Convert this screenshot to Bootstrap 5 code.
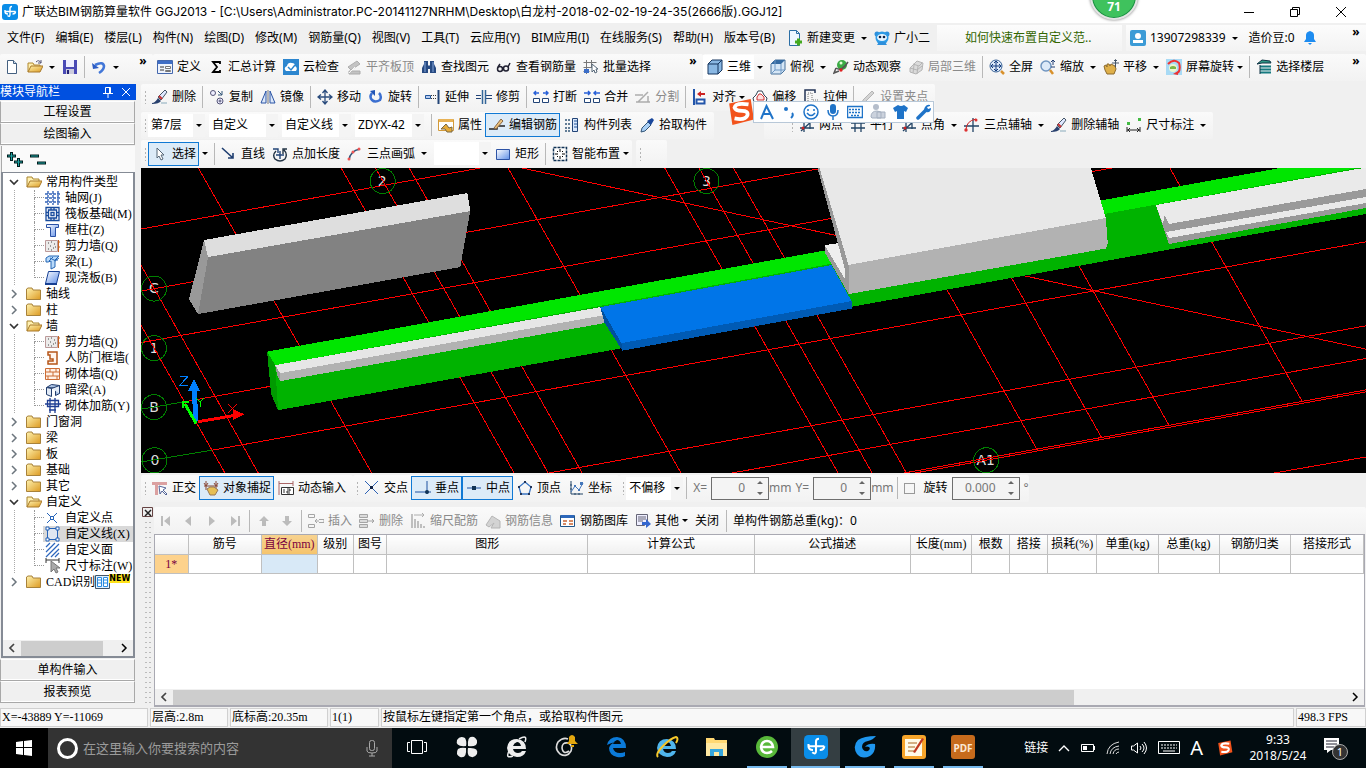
<!DOCTYPE html>
<html lang="zh-CN">
<head>
<meta charset="utf-8">
<meta name="viewport" content="width=device-width, initial-scale=1">
<title>广联达BIM钢筋算量软件 GGJ2013</title>
<link href="https://cdn.jsdelivr.net/npm/bootstrap@5.3.0/dist/css/bootstrap.min.css" rel="stylesheet">
<style>
body{font:12px/16px "Noto Sans","Noto Sans CJK SC",sans-serif;color:#000;background:#f0f0f0;overflow:hidden}
button,a.mn{background:none;border:0;padding:0;color:inherit;font:inherit;text-decoration:none;white-space:nowrap}
svg{flex:none}
.song{font-family:"Liberation Serif","Noto Sans CJK SC",serif}
.titlebar{height:23px;background:#fff;padding:0 2px}
.caption{font-family:Inter,"Noto Sans CJK SC",sans-serif}
.winbtn{width:46px;height:22px}
.menurow{height:28px;padding:2px 0 0 7px}
.mainmenu{gap:11px}
.strip{height:26px;background:linear-gradient(#fcfcfc,#f3f3f3)}
.tipbox{width:185px;color:#336600;padding-left:28px}
.account{width:240px}
.toprow{height:32px}
.bar1{width:153px}.bar2{width:550px}
.toolbar{height:27px;display:flex;align-items:center;background:linear-gradient(#fafafa,#f2f2f2);border-radius:2px;white-space:nowrap}
.brow{height:28px;align-items:center}
.brow.low{height:29px}
.tb{display:inline-flex;align-items:center;gap:4px;height:24px;padding:0 3px 0 4px;border:0}
.tb:disabled{color:#8a8a8a}
.tb:disabled svg{filter:grayscale(1);opacity:.45}
.tb.on{background:#dcebf8;outline:1px solid #1079d4;outline-offset:-1px}
.car{width:0;border:3px solid transparent;border-top:3px solid #000;border-bottom:0;height:3px}
.tb .car{margin-left:-1px}
.split{width:12px;height:24px;display:inline-flex;align-items:center;justify-content:center}
.sep{width:1px;height:22px;background:#b8b8b8;margin:0 2px 0 3px;flex:none}
.grip{width:7px;height:14px;flex:none;background:radial-gradient(circle,#b4b4b4 1px,transparent 1px) 1px 0/7px 4px}
.combo{appearance:none;border:0;height:23px;padding:0 3px;margin-right:4px;border-radius:0;background:url("data:image/svg+xml,%3Csvg xmlns='http://www.w3.org/2000/svg' width='12' height='23'%3E%3Crect width='12' height='23' fill='%23f4f4f4'/%3E%3Cpath d='M3 10h6l-3 3z'/%3E%3C/svg%3E") right center no-repeat #fff;width:69px;color:#000}
.combo.short{width:57px}
.aux{margin-left:50px}
.more{width:12px;height:28px;padding-bottom:12px;font-weight:bold}
.ime{left:727px;top:97px;height:30px;z-index:5}
.imebox{height:22px;background:#fdfeff;border:1px solid #b8c8d8;gap:7px;padding:0 1px 0 5px;margin-left:-2px}
.badge71{left:1090px;top:-28px;width:48px;height:48px;border-radius:50%;background:#3fc25d;border:2px solid #e4e4e4;box-shadow:0 0 3px #777,inset 0 0 0 1px #1c8d44;color:#fff;font-weight:bold;padding-top:25px;text-align:center;z-index:5}
.sidepane{width:138px;padding-right:1px;flex:none}
.sidehead{height:16px;margin:1px 1px 1px 0;background:#0050e0;color:#fff;padding-bottom:1px}
.sidebtn{height:22px;background:#f0f0f0;border:1px solid #a8a8a8;border-top-color:#fff;outline:0;width:135px;display:block;box-shadow:inset 0 -1px #fff}
.sidetool{height:26px;margin:1px 2px 0 1px;border-left:1px solid #aaa;background:#fafafa;gap:7px;padding:0 5px}
.treebox{margin:0 2px 1px 1px;border:2px solid #858b95;border-width:1px 2px 2px;background:#fff;overflow:hidden}
.tree,.tree ul{list-style:none;margin:0;padding:0}
.tree{padding-top:1px}
.tree li{white-space:nowrap;position:relative}
.twig{height:16px;display:flex;align-items:center}
.twig i{width:10px;height:16px;margin:0 7px 0 6px;display:flex;align-items:center;justify-content:center}
.twig svg{margin-right:4px}
.twig .leaf{margin-left:42px;margin-right:4px}
.tree ul{background:linear-gradient(#aaa 50%,transparent 50%) 11px 0/1px 2px repeat-y}
.tree ul li::before{content:"";position:absolute;left:31px;top:0;width:10px;height:8px;border-left:1px dotted #999;border-bottom:1px dotted #999}
.tree ul li:not(:last-child)::after{content:"";position:absolute;left:31px;top:8px;height:8px;border-left:1px dotted #999}
.tree .sel{background:linear-gradient(90deg,transparent 40px,#d9d9d9 40px)}
.hs{height:16px;background:#f0f0f0;display:flex;align-items:center}
.hs b{background:#cdcdcd;height:15px}
.newtag{font:bold 8px/9px "DejaVu Sans",sans-serif;background:#ffe21a;align-self:flex-start;margin-left:-6px}
.view{height:305px;background:#000;display:block;width:100%}
.snaprow{height:30px;align-items:center}
.spin{height:23px;border:1px solid #6e6e6e;background:#f4f4f4;width:58px;display:flex;align-items:center;padding-right:5px}
.spin input{width:100%;min-width:0;border:0;background:none;text-align:right;color:#777;padding:0 12px 0 0}
.spin.wide{width:68px}
.dim{color:#777}
.chk{appearance:none;width:11px;height:11px;border:1px solid #999;background:#f6f6f6;margin:0 9px 0 4px}
.gripcol{width:13px;flex:none;padding:4px 0 2px 1px}
.gripcol div{width:7px;margin:2px auto 0 2px;background:radial-gradient(circle,#bbb 1px,transparent 1px) 0 0/4px 5px}
.griddock{border:1px solid #a9a9b2;border-width:1px 1px 2px 1px;background:#fff;margin-right:1px}
.bars{table-layout:fixed;width:100%;border-collapse:collapse;text-align:center}
.bars th,.bars td{border:1px solid #c0c0c0;height:19px;line-height:16px;padding:0;font-weight:normal;overflow:hidden;white-space:nowrap}
.bars th:first-child{border-left:0}.bars thead th{border-top:0;background:linear-gradient(#fff,#f0f0f0)}
.bars thead .cur{background:linear-gradient(#f7d28f,#f5c46c);color:#7a0040}
.bars tbody .rowno{background:#fdd28c;color:#7a0040}
.bars .curcell{background:#d8e9f7;border-left-color:#000}
.c33{width:33px}.c73{width:73px}.c56{width:56px}.c36{width:36px}.c201{width:201px}.c166{width:166px}.c156{width:156px}.c61{width:61px}.c38{width:38px}.c49{width:49px}.c71{width:71px}
.stat{height:21px;gap:2px;padding-top:1px}
.stat div{border:1px solid #d0d0d0;background:#f8f8f8;padding:0 1px;height:19px;white-space:nowrap}
.st1{width:148px}.st2{width:78px}.st3{width:98px}.st4{width:49px}.st5{width:70px}
.taskbar{height:40px;background:#020c10;color:#fff}
.startbtn{width:48px;height:40px;background:#000}
.seek{width:344px;height:40px;background:#333;padding:0 12px 0 8px;gap:4px}
.seek input{background:none;border:0;color:#fff;flex:1;font-size:13px;min-width:0;padding:0}
.seek input::placeholder{color:#9b9b9b;opacity:1}
.app{width:50px;height:40px;border-bottom:2px solid transparent;display:flex;align-items:center;justify-content:center}
.app.run{border-bottom-color:#76b9ed;width:40px;margin:0 4px 0 5px}
.app.front{width:49px;border-bottom-color:#76b9ed;background:#343e42}
.tray{gap:10px;padding-right:17px}
.clock{width:62px;text-align:center}
</style>
</head>
<body class="d-flex flex-column vh-100">
<svg width="0" height="0" class="position-absolute" aria-hidden="true">
<defs>
<linearGradient id="gb" x2="1" y2="1"><stop stop-color="#fff"/><stop offset="1" stop-color="#5f8fe8"/></linearGradient>
<linearGradient id="gy" x2="1" y2="1"><stop stop-color="#fff3b0"/><stop offset="1" stop-color="#dc9a22"/></linearGradient>
</defs>
<symbol id="logo" viewBox="0 0 16 16"><rect width="16" height="16" rx="3" fill="#0a8de8"/><path d="M5.500 11.500q2.500 2 2.500-1V4.500q0-2 2-2M3 7.500h10.500M3 6v1.500q0 2.500 3 2.500M13.500 7.500q0 2.500-3 2.500" fill="none" stroke="#fff" stroke-width="1.400"/></symbol>
<symbol id="new" viewBox="0 0 16 16"><path d="M3.500 1.500h6l3 3v10h-9z" fill="#fff" stroke="#446080"/><path d="M9.500 1.500v3h3" fill="#cde" stroke="#446080"/></symbol>
<symbol id="open" viewBox="0 0 16 16"><path d="M1 13V4h5l1 2h6v3" fill="#fff0b0" stroke="#b08830"/><path d="M1 13l3-6h12l-3 6z" fill="url(#gy)" stroke="#a8792a"/><path d="M9 3q3-3 5 1m0-3v3h-3" fill="none" stroke="#557"/></symbol>
<symbol id="save" viewBox="0 0 16 16"><path d="M1 1h14v14H1z" fill="#4a4ab5"/><path d="M4 1h8v7H4z" fill="#eef"/><path d="M4 10h8v5H4z" fill="#ccd"/><path d="M5 11h2v4H5z" fill="#227"/></symbol>
<symbol id="undo" viewBox="0 0 16 16"><path d="M4 6q8-4 9 1 0 4-5 7" fill="none" stroke="#4277d8" stroke-width="2.600"/><path d="M1 4l1 6 6-1z" fill="#2c5cc4"/></symbol>
<symbol id="form" viewBox="0 0 16 16"><path d="M.5 1.500h15v13H.5z" fill="#eef3fc" stroke="#4468ae"/><path d="M1 2h14v3H1z" fill="#3f6ec6"/><path d="M3 8h4M3 11h4" stroke="#333"/><path d="M8.500 7.500h5v2h-5zM8.500 11.500h5v1h-5z" fill="#fff" stroke="#777"/></symbol>
<symbol id="sum" viewBox="0 0 16 16"><path d="M12 5V3H5l4 5-4 5h7v-2" fill="none" stroke="#000" stroke-width="1.800"/></symbol>
<symbol id="cloud" viewBox="0 0 16 16"><rect width="16" height="16" fill="#2c86cf"/><path d="M3 12q-3-3 1-5 1-4 5-3 3 0 3 3 3 2 1 5z" fill="#fff"/><path d="M5 8l3 3 4-5" fill="none" stroke="#2c86cf" stroke-width="1.500"/></symbol>
<symbol id="flat" viewBox="0 0 16 16"><path d="M2 8l9-6 3 3-9 6zM3 12h11v3H3z" fill="#888" stroke="#555"/><path d="M3 14l6-6" stroke="#fff"/></symbol>
<symbol id="bino" viewBox="0 0 16 16"><path d="M3 2h4v4l1 1 1-1V2h4v3l2 4v5H9v-4H7v4H1V9l2-4z" fill="#274a82"/><path d="M4 3v10M12 3v10" stroke="#86a8dd"/></symbol>
<symbol id="specs" viewBox="0 0 16 16"><g fill="none" stroke="#223" stroke-width="1.500"><circle cx="4" cy="10" r="2.500"/><circle cx="10" cy="9.500" r="2.500"/><path d="M6 9h2M12 8l2-4M2 8l2-3"/></g></symbol>
<symbol id="batch" viewBox="0 0 16 16"><path d="M3.500 1v14M8.500 1v8M.5 3.500h13M.5 8.500h8M.5 12.500h6" stroke="#777"/><path d="M1 10h5v4H1z" fill="#3b6ec8"/><path d="M9 5v8l2-2 1 3 2-1-1-3h2z" fill="#fff" stroke="#567"/></symbol>
<symbol id="cube" viewBox="0 0 16 16"><path d="M1 5l4-4h10v10l-4 4H1z" fill="#8ab8e4" stroke="#15355e"/><path d="M1 5h10v10M11 5l4-4" fill="none" stroke="#15355e"/></symbol>
<symbol id="cubetop" viewBox="0 0 16 16"><path d="M1 5l4-4h10v10l-4 4H1z" fill="#d5e6f6" stroke="#46709a"/><path d="M1 5l4-4h10l-4 4z" fill="#356ba2"/><path d="M11 5v10M5 1v10l-4 4M5 11h10" fill="none" stroke="#6d97c4"/></symbol>
<symbol id="orbit" viewBox="0 0 16 16"><circle cx="9" cy="6" r="5" fill="#3bab44"/><circle cx="8" cy="4" r="1.500" fill="#e3ffd8"/><path d="M3 9q6 4 12-6M3 9l-2 5 5-2" fill="none" stroke="#555" stroke-width="1.500"/><circle cx="8" cy="11" r="1.700" fill="#d22"/></symbol>
<symbol id="part" viewBox="0 0 16 16"><path d="M2 9l7-7 6 2-1 7-6 4-6-2z" fill="#bbb" stroke="#666"/><path d="M5 5l6 2 3-3M2 9l7 2 5-4M9 15l1-8M5 14l1-8" fill="none" stroke="#666"/></symbol>
<symbol id="full" viewBox="0 0 16 16"><circle cx="7" cy="7" r="6" fill="#dce9f8" stroke="#3a6295"/><path d="M7 2v10M2 7h10M5 4l2-2 2 2M5 10l2 2 2-2M4 5L2 7l2 2M10 5l2 2-2 2" fill="none" stroke="#123b7e"/><path d="M12 12l3 3" stroke="#d8912c" stroke-width="2.500"/></symbol>
<symbol id="zoom" viewBox="0 0 16 16"><circle cx="6" cy="7" r="5" fill="#dce9f8" stroke="#7095c0" stroke-width="1.500"/><path d="M10 11l3 4" stroke="#d8912c" stroke-width="2.500"/><path d="M13 1v5M11 3l2-2 2 2M11 8h4" fill="none" stroke="#223f75"/></symbol>
<symbol id="hand" viewBox="0 0 16 16"><path d="M1 7l2-1 1 2V5h2l1 2 1-2 2 1 2 1 1 3-2 5H4l-2-4z" fill="#dfb04a" stroke="#8c6a2d"/><path d="M9 4h7M12.500 1v7M11 2l1.500-1.500L14 2" fill="none" stroke="#456"/></symbol>
<symbol id="screen" viewBox="0 0 16 16"><path d="M0 0h16v16H0z" fill="#a8daf5"/><path d="M2 5q6-6 11-1 2 6-1 10" fill="none" stroke="#e33" stroke-width="2"/><circle cx="7" cy="9" r="4" fill="#ebf6cf"/><path d="M7 15l5-3v4z" fill="#e33"/><path d="M4 8q3-2 6 0v2H4z" fill="#7db648"/></symbol>
<symbol id="floors" viewBox="0 0 16 16"><path d="M1 5l5-4 8 1 1 2H6z" fill="#2c9a86" stroke="#134"/><path d="M4 7.500h11M4 10.500h11M4 13.500h11" stroke="#157a80" stroke-width="2"/><path d="M4 6v9" stroke="#134"/></symbol>
<symbol id="brush" viewBox="0 0 16 16"><path d="M0 14q3 0 6-5l3 3q-2 3-9 3z" fill="#29416e"/><path d="M6 8l7-7 2 2-6 8z" fill="#dfe8ff" stroke="#456"/><path d="M7 7l3 3" stroke="#c33" stroke-width="2"/><path d="M9 14h6" stroke="#8ab"/></symbol>
<symbol id="copy" viewBox="0 0 16 16"><g fill="#eef" stroke="#557"><circle cx="4" cy="4" r="2.500"/><circle cx="11" cy="12" r="3"/><circle cx="11" cy="12" r="1"/></g><path d="M9 2l4 4m0-4v4H9" fill="none" stroke="#357"/></symbol>
<symbol id="mirror" viewBox="0 0 16 16"><path d="M6 2v12H1zM10 2v12h5z" fill="#dce8fa" stroke="#2a54a5"/><path d="M8 1v14" stroke="#777"/></symbol>
<symbol id="move" viewBox="0 0 16 16"><path d="M8 1v14M1 8h14M5.500 4L8 1l2.500 3M5.500 12L8 15l2.500-3M4 5.500L1 8l3 2.500M12 5.500L15 8l-3 2.500" fill="none" stroke="#2b4c7d" stroke-width="1.300"/></symbol>
<symbol id="rot" viewBox="0 0 16 16"><path d="M4 4q-3 4 0 7t8 0q2-4-1-7" fill="none" stroke="#3b6fd0" stroke-width="2.500"/><path d="M7 1v6L2 2z" fill="#2255b5"/></symbol>
<symbol id="extend" viewBox="0 0 16 16"><path d="M.5 6.500h5v3h-5z" fill="#b8ccf0" stroke="#259"/><path d="M6 6.500h6M6 9.500h6" stroke="#333" stroke-dasharray="1 1"/><path d="M13.500 1v14" stroke="#247" stroke-width="2"/></symbol>
<symbol id="trim" viewBox="0 0 16 16"><path d="M0 6.500h5M0 9.500h5M10 6.500h6M10 9.500h6" stroke="#247"/><path d="M6.500 1v14M9.500 1v14" stroke="#369" stroke-width="1.500"/></symbol>
<symbol id="brk" viewBox="0 0 16 16"><path d="M1 4h5M10 4h5M3 2L1 4l2 2M13 2l2 2-2 2" fill="none" stroke="#2860d8" stroke-width="1.500"/><path d="M.5 9.500h6v4h-6zM9.500 9.500h6v4h-6z" fill="#fff" stroke="#247"/></symbol>
<symbol id="join" viewBox="0 0 16 16"><path d="M0 4h6M10 4h6M4 2l2 2-2 2M12 2l-2 2 2 2" fill="none" stroke="#2860d8" stroke-width="1.500"/><path d="M.5 9.500h6v4h-6zM9.500 9.500h6v4h-6z" fill="#fff" stroke="#247"/></symbol>
<symbol id="split" viewBox="0 0 16 16"><path d="M0 6h8M1 13h14M13 7v6M3 13L13 3" stroke="#555" stroke-width="1.500"/></symbol>
<symbol id="align" viewBox="0 0 16 16"><path d="M2 0v16" stroke="#25a" stroke-width="2"/><path d="M5 5l4-3v2h4v2H9v2z" fill="#c22"/><path d="M4.500 10.500h8v4h-8z" fill="#fff" stroke="#25a" stroke-width="2"/></symbol>
<symbol id="offset" viewBox="0 0 16 16"><path d="M2 13L1 9l3-3 2-4h4l2 4 3 3-1 4z" fill="#fff" stroke="#345"/><path d="M5 11V8l2-3h2l3 3v3z" fill="#fdd" stroke="#c33"/></symbol>
<symbol id="stretch" viewBox="0 0 16 16"><path d="M12 4V1H2v13h3" fill="none" stroke="#235" stroke-width="1.500"/><path d="M5 4h4v7h6v4H5z" fill="none" stroke="#777" stroke-dasharray="1 1"/></symbol>
<symbol id="pen" viewBox="0 0 16 16"><path d="M2 15l1-4L12 2l2 2-9 9z" fill="#aaa" stroke="#666"/></symbol>
<symbol id="prop" viewBox="0 0 16 16"><path d="M.5 2.500h15v11H.5z" fill="#fff" stroke="#d29a3a"/><path d="M1 2h14v3H1z" fill="#e8b255"/><path d="M3 12l5-5 3 4 3-1v5H9l-2-3z" fill="#e7ab38" stroke="#764"/></symbol>
<symbol id="rebar" viewBox="0 0 16 16"><path d="M0 12h8V9h8" fill="none" stroke="#222" stroke-width="1.500"/><path d="M5 11l7-9 2 2-7 8z" fill="#ecc27c" stroke="#864"/></symbol>
<symbol id="list" viewBox="0 0 16 16"><path d="M8.500 1.500h5v13h-5z" fill="#d9e7fb" stroke="#247"/><path d="M10 4h3M10 7h3M10 10h3" stroke="#259"/><path d="M1 3h5M1 7h5M1 11h5M1 14h5" stroke="#357" stroke-dasharray="2 1" stroke-width="1.500"/></symbol>
<symbol id="pick" viewBox="0 0 16 16"><path d="M2 15l1-4 6-6 3 3-6 6z" fill="#a9d0f7" stroke="#357"/><path d="M8 4l4 4 3-5-2-2z" fill="#1b489c"/></symbol>
<symbol id="axis2" viewBox="0 0 16 16"><path d="M1 11h14M5 15V5M11 12V4M2 14L14 3" stroke="#246" stroke-width="1.300"/><circle cx="4" cy="11" r="1.500" fill="#c22"/></symbol>
<symbol id="axisp" viewBox="0 0 16 16"><path d="M1 6h14M1 11h14M5 2v13M11 2v13" stroke="#246" stroke-width="1.300"/></symbol>
<symbol id="axis3" viewBox="0 0 16 16"><path d="M0 9h15M9 1v14" stroke="#246" stroke-width="1.300"/><path d="M2 13q0-9 10-11" fill="none" stroke="#c22"/><circle cx="2" cy="13" r="1.700" fill="#d33"/><circle cx="12" cy="3" r="1.500" fill="#d33"/></symbol>
<symbol id="dim" viewBox="0 0 16 16"><path d="M1 10v5M14 10v5M1 13h13M4 11l-2 2 2 2M11 11l2 2-2 2" fill="none" stroke="#222"/><path d="M1 5h3v3H1zM12 1h3v3h-3z" fill="#4b4"/></symbol>
<symbol id="cursor" viewBox="0 0 16 16"><path d="M5 2v10l2-2 2 4 2-1-2-4h3z" fill="#fff" stroke="#567"/></symbol>
<symbol id="line" viewBox="0 0 16 16"><path d="M1 2l11 10M12 7v5H7" fill="none" stroke="#1f3e70" stroke-width="1.600"/></symbol>
<symbol id="ptlen" viewBox="0 0 16 16"><path d="M1 3h5v4M8 5v8M4 9h8" fill="none" stroke="#247" stroke-width="1.400"/><path d="M4 5q-4 4-1 8 5 4 10 0 3-5-1-9M11 8V3h4" fill="none" stroke="#234" stroke-width="1.400"/></symbol>
<symbol id="arc" viewBox="0 0 16 16"><path d="M2 14Q3 5 13 3" fill="none" stroke="#357" stroke-width="1.500"/><g fill="#e55"><circle cx="2" cy="13" r="1.500"/><circle cx="6" cy="6" r="1.500"/><circle cx="12" cy="3" r="1.500"/></g></symbol>
<symbol id="rect" viewBox="0 0 16 16"><path d="M1.500 3.500h13v10h-13z" fill="url(#gb)" stroke="#2d53a5"/></symbol>
<symbol id="smart" viewBox="0 0 16 16"><path d="M1.500 1.500h13v13h-13z" fill="#fff" stroke="#135" stroke-width="1.500" stroke-dasharray="3 1"/><path d="M8 3v3M8 10v3M3 8h3M10 8h3M5 5l1 1M11 5l-1 1M5 11l1-1M11 11l-1-1" stroke="#000"/></symbol>
<symbol id="ortho" viewBox="0 0 16 16"><path d="M0 2h15v3H6v10H3V5H0z" fill="#dba0a0"/><path d="M7 6l1 8 2-3 4 4 1-1-4-4 3-2z" fill="#fff" stroke="#569"/></symbol>
<symbol id="osnap" viewBox="0 0 16 16"><path d="M1 6h14M3 1v9M13 1v9M1 3l2 3 2-3M11 3l2 3 2-3" fill="none" stroke="#843"/><path d="M4 9l3-2h4l4 3-3 5H7z" fill="#e6bf55" stroke="#975"/></symbol>
<symbol id="dyn" viewBox="0 0 16 16"><path d="M1 1v14M15 1v5M1 3.500h14" stroke="#a66"/><path d="M3.500 7.500h12v7h-12zM6 9v4M9 9h3v2H9v2h3" fill="#fff" stroke="#333"/></symbol>
<symbol id="cross" viewBox="0 0 16 16"><path d="M1 1l13 13M14 1L1 14" stroke="#2c61b4"/><path d="M6 6h3v3H6z" fill="#124"/></symbol>
<symbol id="perp" viewBox="0 0 16 16"><path d="M0 12h16M12 1v13" stroke="#1d50a0"/><circle cx="12" cy="12" r="2" fill="#135"/></symbol>
<symbol id="mid" viewBox="0 0 16 16"><path d="M1 8h14" stroke="#1d50a0"/><path d="M6 6h4v4H6z" fill="#135"/></symbol>
<symbol id="vert" viewBox="0 0 16 16"><path d="M8 2l6 5-2 7H4L2 7z" fill="none" stroke="#3b76c4" stroke-width="1.300"/><path d="M7 1h2v2H7zM1 6h2v2H1zM13 6h2v2h-2zM3 13h2v2H3zM11 13h2v2h-2z" fill="#235"/></symbol>
<symbol id="coord" viewBox="0 0 16 16"><path d="M3 1v13h12M2 5h2M2 9h2M7 13v2M11 13v2" fill="none" stroke="#246"/><path d="M3 12l4-6 4 4 4-7" fill="none" stroke="#47b"/><path d="M6 5h2v2H6zM10 9h2v2h-2zM12 2h3v3h-3z" fill="#47b"/></symbol>
<symbol id="first" viewBox="0 0 16 16"><path d="M3 3h2v10H3zM12 3v10L6 8z" fill="#777"/></symbol>
<symbol id="prev" viewBox="0 0 16 16"><path d="M10 3v10L4 8z" fill="#777"/></symbol>
<symbol id="next" viewBox="0 0 16 16"><path d="M5 3v10l6-5z" fill="#777"/></symbol>
<symbol id="last" viewBox="0 0 16 16"><path d="M11 3h2v10h-2zM4 3v10l6-5z" fill="#777"/></symbol>
<symbol id="up" viewBox="0 0 16 16"><path d="M8 3l5 5h-3v5H6V8H3z" fill="#777"/></symbol>
<symbol id="down" viewBox="0 0 16 16"><path d="M8 13l5-5h-3V3H6v5H3z" fill="#777"/></symbol>
<symbol id="ins" viewBox="0 0 16 16"><path d="M.5 1.500h6v3h-6zM.5 11.500h6v3h-6zM11 6.500h5v3h-5M7 8h4M9 6L7 8l2 2" fill="none" stroke="#444"/></symbol>
<symbol id="del" viewBox="0 0 16 16"><path d="M.5 1.500h8v3h-8zM.5 6.500h8v3h-8zM.5 11.500h8v3h-8zM9 8h6M13 6l2 2-2 2" fill="#bbb" stroke="#444"/></symbol>
<symbol id="scale" viewBox="0 0 16 16"><path d="M2 1v14M5 6v9M8 8v7M11 11v4M14 13v2" stroke="#555" stroke-width="1.500"/><path d="M4 2h10M12 0l2 2-2 2" fill="none" stroke="#555"/></symbol>
<symbol id="info" viewBox="0 0 16 16"><path d="M1 12l6-9 8 5v7H6l3-5-5 4z" fill="#aaa" stroke="#666"/></symbol>
<symbol id="lib" viewBox="0 0 16 16"><path d="M.5 2.500h14v11H.5z" fill="#fff" stroke="#258"/><path d="M1 2h13v3H1z" fill="#2d68bb"/><path d="M3 8h4M9 8h4M3 11h3M9 11h4" stroke="#c63" stroke-width="1.500"/></symbol>
<symbol id="other" viewBox="0 0 16 16"><path d="M1.500 1.500h11v8l-3 3h-8z" fill="#eef" stroke="#667"/><path d="M3 4h8M3 6h8M3 8h5" stroke="#667"/><path d="M7 9h4V6l5 5-5 4v-3H7z" fill="#3366cf"/></symbol>
<symbol id="fo" viewBox="0 0 16 16"><path d="M1 13V3h5l1 2h6v2" fill="#fff0b0" stroke="#a88430"/><path d="M1 13l3-6h12l-3 6z" fill="url(#gy)" stroke="#a8792a"/></symbol>
<symbol id="fc" viewBox="0 0 16 16"><path d="M.5 13.500V3L2 2h4l1 2h7.500v9.500z" fill="url(#gy)" stroke="#a8823a"/></symbol>
<symbol id="tgrid" viewBox="0 0 16 16"><path d="M3 1v14M8 1v14M13 1v14M0 4h16M0 8h16M0 12h16" stroke="#3564b8" stroke-width="1.400" stroke-dasharray="3 1"/></symbol>
<symbol id="traft" viewBox="0 0 16 16"><path d="M1 1.500h13v13H1zM3.500 4h8v8h-8zM6 6.500h3v3H6zM1 6.500h2.500M1 9.500h2.500M11.500 6.500H14M11.500 9.500H14M6 1.500V4M9 1.500V4M6 12v2.500M9 12v2.500" fill="#fff" stroke="#174a9c" stroke-width="1.300"/></symbol>
<symbol id="tcol" viewBox="0 0 16 16"><path d="M1.500 2.500h12v3h-3v9h-5v-9h-4z" fill="url(#gb)" stroke="#2950a5"/></symbol>
<symbol id="twall" viewBox="0 0 16 16"><path d="M.5 2.500h12v11H.5z" fill="#ecebea" stroke="#b99"/><path d="M3 5h1M6 4h1M9 6h1M5 8h1M8 10h1M3 11h1M6 12h1M10 9h1" stroke="#444"/><path d="M13.500 2v12M13 4h2M13 9h2" stroke="#c7621e"/></symbol>
<symbol id="tbeam" viewBox="0 0 16 16"><path d="M1 4l3-2h10l-4 4v7l-4 2V7L3 8H1z" fill="#b9dafa" stroke="#2566b5"/><path d="M5 4l6 3M11 6l3-2M4 7l4-4M10 6l3 0" stroke="#2566b5"/></symbol>
<symbol id="tslab" viewBox="0 0 16 16"><path d="M3.500 1.500h11l-3 12H.5z" fill="url(#gb)" stroke="#173f92"/><path d="M0 14h12" stroke="#173f92" stroke-width="2"/></symbol>
<symbol id="tdoor" viewBox="0 0 16 16"><path d="M3 2h9v12H3v-3h5V9H5V5H3z" fill="#fff4ec" stroke="#b65518" stroke-width="1.500"/></symbol>
<symbol id="tbrick" viewBox="0 0 16 16"><path d="M.5 2.500h14v11H.5zM.5 6h14M.5 10h14M5 2v4M11 2v4M8 6v4M3 10v4M12 10v4" fill="#fff1e6" stroke="#cc6c35"/></symbol>
<symbol id="tdark" viewBox="0 0 16 16"><path d="M1.500 5.500l5-3 8 1v8l-4 2V6z" fill="#a9c1e3" stroke="#213c6c"/><path d="M1.500 5.500l5 1v8l-5-2zM6.500 6.500l8-3v8" fill="#e2ebf7" stroke="#213c6c"/></symbol>
<symbol id="tbar" viewBox="0 0 16 16"><path d="M2.500 2.500h11v6h-11zM0 6h16M5 0v15M10 0v15M4 12h7" fill="none" stroke="#1f3f94" stroke-width="1.300"/></symbol>
<symbol id="tpt" viewBox="0 0 16 16"><path d="M2 3l10 10M12 3L2 13" stroke="#2563b8"/><path d="M5.500 6.500h3v3h-3z" fill="#fff" stroke="#2563b8"/></symbol>
<symbol id="tline" viewBox="0 0 16 16"><path d="M2.500 2.500h10v11h-10z" fill="#dfe6f1" stroke="#2563b8"/><path d="M1 1h3v3H1zM11 1h3v3h-3zM1 12h3v3H1zM11 12h3v3h-3z" fill="#fff" stroke="#2563b8"/></symbol>
<symbol id="tarea" viewBox="0 0 16 16"><path d="M1 5l4-4M1 10l9-9M1 15L14 2M6 15l8-8M10 15l4-4" stroke="#2c66bd" stroke-width="1.200"/></symbol>
<symbol id="tdim" viewBox="0 0 16 16"><path d="M1 0v5M14 0v5M1 2h13" stroke="#333"/><path d="M6 3v11l3-3 2 4 2-1-2-4h4z" fill="#aaa" stroke="#777"/></symbol>
<symbol id="sogou" viewBox="0 0 26 26"><path d="M2 5l20-4 3 19-20 5z" fill="#f2531c"/><path d="M20 6q-12-2-13 3 1 3 7 3t5 4q-2 5-12 3" fill="none" stroke="#fff" stroke-width="3.500"/></symbol>
<symbol id="cl" viewBox="0 0 10 10"><path d="M7 1L3 5l4 4" fill="none" stroke="#444" stroke-width="1.700"/></symbol>
<symbol id="cr" viewBox="0 0 10 10"><path d="M3 1l4 4-4 4" fill="none" stroke="currentColor" stroke-width="1.500"/></symbol>
<symbol id="cd" viewBox="0 0 10 10"><path d="M1 3l4 4 4-4" fill="none" stroke="#333" stroke-width="1.700"/></symbol>
<symbol id="ud" viewBox="0 0 6 16"><path d="M0 4l3-3 3 3zM0 12l3 3 3-3z" fill="#666"/></symbol>
</svg>

<header class="titlebar d-flex align-items-center">
  <svg width="16" height="16"><use href="#logo"/></svg><span class="caption ms-1 text-nowrap">广联达BIM钢筋算量软件 GGJ2013 - [C:\Users\Administrator.PC-20141127NRHM\Desktop\白龙村-2018-02-02-19-24-35(2666版).GGJ12]</span>
  <div class="ms-auto d-flex">
    <button class="winbtn" aria-label="最小化"><svg width="12" height="12"><path d="M1 6.500h10" stroke="#000"/></svg></button>
    <button class="winbtn" aria-label="还原"><svg width="12" height="12"><path d="M1.500 3.500h7v7h-7zM3.500 3.500v-2h7v7h-2" fill="none" stroke="#000"/></svg></button>
    <button class="winbtn" aria-label="关闭"><svg width="12" height="12"><path d="M1 1l10 10M11 1L1 11" stroke="#000"/></svg></button>
  </div>
</header>
<div class="badge71 position-absolute">71</div>

<div class="menurow d-flex align-items-center">
  <nav class="mainmenu d-flex">
    <a class="mn" href="#">文件(F)</a><a class="mn" href="#">编辑(E)</a><a class="mn" href="#">楼层(L)</a><a class="mn" href="#">构件(N)</a><a class="mn" href="#">绘图(D)</a><a class="mn" href="#">修改(M)</a><a class="mn" href="#">钢筋量(Q)</a><a class="mn" href="#">视图(V)</a><a class="mn" href="#">工具(T)</a><a class="mn" href="#">云应用(Y)</a><a class="mn" href="#">BIM应用(I)</a><a class="mn" href="#">在线服务(S)</a><a class="mn" href="#">帮助(H)</a><a class="mn" href="#">版本号(B)</a>
  </nav>
  <div class="ms-auto d-flex align-items-center">
    <button class="tb"><svg width="16" height="16"><path d="M2.500.5h7l3 3v12h-10z" fill="#eef7ff" stroke="#2b6ea5"/><path d="M9.500.5v3h3" fill="none" stroke="#2b6ea5"/><path d="M8 12h7M11.500 8.500v7" stroke="#43a91f" stroke-width="3"/></svg>新建变更</button><button class="split" aria-label="更多"><span class="car"></span></button>
    <button class="tb"><svg width="16" height="16"><circle cx="3" cy="4" r="2.500" fill="#2e8fdb"/><circle cx="13" cy="4" r="2.500" fill="#2e8fdb"/><circle cx="8" cy="8" r="6.500" fill="#2e9be6"/><path d="M3 15l2-3h6l2 3z" fill="#2e8fdb"/><ellipse cx="8" cy="7.500" rx="5" ry="3.500" fill="#e8f5ff"/><circle cx="6" cy="7" r="1.300" fill="#124"/><circle cx="10" cy="7" r="1.300" fill="#124"/></svg>广小二</button>
  </div>
  <div class="strip tipbox d-flex align-items-center ms-1">如何快速布置自定义范..</div>
  <div class="strip account d-flex align-items-center ms-1">
    <button class="tb"><svg width="16" height="16"><rect width="16" height="16" rx="2" fill="#3c9bd6"/><circle cx="8" cy="6" r="3" fill="#fff"/><path d="M3 10h10v3H3z" fill="#fff"/></svg>13907298339</button><button class="split" aria-label="账号"><span class="car"></span></button>
    <span class="ms-1 ps-1">造价豆:0</span><svg class="ms-2" width="14" height="16"><path d="M1 12l2-3V5q0-3 4-4 4 1 4 4v4l2 3z" fill="#1e8cf0"/><path d="M5 13h4l-2 2z" fill="#1e8cf0"/></svg>
    <button class="more ms-auto me-1">»</button>
  </div>
</div>

<div class="toprow d-flex align-items-center">
  <div class="toolbar bar1">
    <button class="tb" aria-label="新建"><svg width="16" height="16"><use href="#new"/></svg></button><button class="tb" aria-label="打开"><svg width="16" height="16"><use href="#open"/></svg></button><button class="split" aria-label="最近"><span class="car"></span></button><button class="tb" aria-label="保存"><svg width="16" height="16"><use href="#save"/></svg></button><span class="sep"></span><button class="tb" aria-label="撤销"><svg width="16" height="16"><use href="#undo"/></svg></button><button class="split" aria-label="撤销列表"><span class="car"></span></button><button class="more ms-auto me-1">»</button>
  </div>
  <div class="toolbar bar2">
    <button class="tb"><svg width="16" height="16"><use href="#form"/></svg>定义</button><button class="tb"><svg width="16" height="16"><use href="#sum"/></svg>汇总计算</button><button class="tb"><svg width="16" height="16"><use href="#cloud"/></svg>云检查</button><button class="tb" disabled><svg width="16" height="16"><use href="#flat"/></svg>平齐板顶</button><button class="tb"><svg width="16" height="16"><use href="#bino"/></svg>查找图元</button><button class="tb"><svg width="16" height="16"><use href="#specs"/></svg>查看钢筋量</button><button class="tb"><svg width="16" height="16"><use href="#batch"/></svg>批量选择</button><button class="more ms-auto me-1">»</button>
  </div>
  <div class="toolbar flex-grow-1">
    <button class="tb bg-white"><svg width="16" height="16"><use href="#cube"/></svg>三维</button><button class="split" aria-label="视角"><span class="car"></span></button><button class="tb"><svg width="16" height="16"><use href="#cubetop"/></svg>俯视</button><button class="split" aria-label="视图方向"><span class="car"></span></button><button class="tb"><svg width="16" height="16"><use href="#orbit"/></svg>动态观察</button><button class="tb" disabled><svg width="16" height="16"><use href="#part"/></svg>局部三维</button><span class="sep"></span><button class="tb"><svg width="16" height="16"><use href="#full"/></svg>全屏</button><button class="tb"><svg width="16" height="16"><use href="#zoom"/></svg>缩放</button><button class="split" aria-label="缩放选项"><span class="car"></span></button><button class="tb"><svg width="16" height="16"><use href="#hand"/></svg>平移</button><button class="split" aria-label="平移选项"><span class="car"></span></button><button class="tb"><svg width="16" height="16"><use href="#screen"/></svg>屏幕旋转<span class="car"></span></button><span class="sep"></span><button class="tb"><svg width="16" height="16"><use href="#floors"/></svg>选择楼层</button><button class="more ms-auto me-1">»</button>
  </div>
</div>

<div class="ime position-absolute d-flex align-items-center">
  <svg width="28" height="28"><use href="#sogou"/></svg>
  <div class="imebox d-flex align-items-center">
    <svg width="16" height="16"><path d="M2 15L7.500 2 14 15M4 10h8" fill="none" stroke="#1e73c8" stroke-width="2"/></svg>
    <svg width="14" height="16"><circle cx="4" cy="5" r="2" fill="#1e73c8"/><path d="M10 9q2 2-1 5" fill="none" stroke="#1e73c8" stroke-width="2"/></svg>
    <svg width="16" height="16" fill="none" stroke="#1e73c8" stroke-width="1.500"><circle cx="8" cy="8" r="7"/><path d="M4 9q4 5 8 0M5 5v2M11 5v2"/></svg>
    <svg width="14" height="16"><rect x="4" y="0" width="6" height="10" rx="3" fill="#1e73c8"/><path d="M2 6q0 6 5 6t5-6M7 12v4" fill="none" stroke="#1e73c8" stroke-width="1.500"/></svg>
    <svg width="16" height="16"><path d="M.5 2.500h15v11H.5z" fill="none" stroke="#1e73c8" stroke-width="1.500"/><path d="M2 5.500h12M2 8.500h12M4 11.500h8" stroke="#1e73c8" stroke-width="1.500" stroke-dasharray="2 1"/></svg>
    <svg width="16" height="16"><circle cx="6" cy="3" r="3" fill="#b4bdcb"/><path d="M1 13q0-6 6-6l4 1v6H2zM7 8h8v6H7z" fill="#cbd2dd" stroke="#a5b0c0"/></svg>
    <svg width="16" height="16"><path d="M5 1q3 2 6 0l4 3-2 4-2-1v8H4V7L2 8 0 4z" fill="#1e73c8"/></svg>
    <svg width="16" height="16"><path d="M2 14L10 6" stroke="#1e73c8" stroke-width="3.500" stroke-linecap="round"/><path d="M14 2l-3 1 1 2 3-1q0 5-5 4-3-2-1-5t5-2z" fill="#1e73c8"/></svg>
  </div>
</div>

<div class="d-flex flex-grow-1">
<aside class="sidepane d-flex flex-column song">
  <div class="sidehead d-flex align-items-center">模块导航栏
    <svg class="ms-auto" width="12" height="12" stroke="#fff" fill="none"><path d="M3.500 7V1.500h5V7M1 7.500h10M6 8v4M7.500 2v5"/></svg><svg class="ms-1 me-1" width="14" height="12" stroke="#fff"><path d="M4 2l8 8M12 2l-8 8"/></svg></div>
  <button class="sidebtn">工程设置</button>
  <button class="sidebtn">绘图输入</button>
  <div class="sidetool d-flex align-items-center"><svg width="16" height="16"><path d="M0 5h9M4.500 1v9M7 11h9M11.500 7v9" stroke="#001c1c" stroke-width="3"/><path d="M1 5h7M4.500 2v7M8 11h7M11.500 8v7" stroke="#1ca3a3"/></svg><svg width="16" height="16"><path d="M0 5h9M7 12h9" stroke="#001c1c" stroke-width="3"/><path d="M1 5h7M8 12h7" stroke="#1ca3a3"/></svg></div>
  <div class="treebox flex-grow-1 d-flex flex-column">
    <ul class="tree flex-grow-1">
      <li><div class="twig"><i><svg width="10" height="10" class="m-0"><use href="#cd"/></svg></i><svg width="16" height="16"><use href="#fo"/></svg>常用构件类型</div>
        <ul>
          <li><div class="twig"><svg class="leaf" width="16" height="16"><use href="#tgrid"/></svg>轴网(J)</div></li>
          <li><div class="twig"><svg class="leaf" width="16" height="16"><use href="#traft"/></svg>筏板基础(M)</div></li>
          <li><div class="twig"><svg class="leaf" width="16" height="16"><use href="#tcol"/></svg>框柱(Z)</div></li>
          <li><div class="twig"><svg class="leaf" width="16" height="16"><use href="#twall"/></svg>剪力墙(Q)</div></li>
          <li><div class="twig"><svg class="leaf" width="16" height="16"><use href="#tbeam"/></svg>梁(L)</div></li>
          <li><div class="twig"><svg class="leaf" width="16" height="16"><use href="#tslab"/></svg>现浇板(B)</div></li>
        </ul></li>
      <li><div class="twig"><i><svg width="10" height="10" class="m-0 text-secondary"><use href="#cr"/></svg></i><svg width="16" height="16"><use href="#fc"/></svg>轴线</div></li>
      <li><div class="twig"><i><svg width="10" height="10" class="m-0 text-secondary"><use href="#cr"/></svg></i><svg width="16" height="16"><use href="#fc"/></svg>柱</div></li>
      <li><div class="twig"><i><svg width="10" height="10" class="m-0"><use href="#cd"/></svg></i><svg width="16" height="16"><use href="#fo"/></svg>墙</div>
        <ul>
          <li><div class="twig"><svg class="leaf" width="16" height="16"><use href="#twall"/></svg>剪力墙(Q)</div></li>
          <li><div class="twig"><svg class="leaf" width="16" height="16"><use href="#tdoor"/></svg>人防门框墙(</div></li>
          <li><div class="twig"><svg class="leaf" width="16" height="16"><use href="#tbrick"/></svg>砌体墙(Q)</div></li>
          <li><div class="twig"><svg class="leaf" width="16" height="16"><use href="#tdark"/></svg>暗梁(A)</div></li>
          <li><div class="twig"><svg class="leaf" width="16" height="16"><use href="#tbar"/></svg>砌体加筋(Y)</div></li>
        </ul></li>
      <li><div class="twig"><i><svg width="10" height="10" class="m-0 text-secondary"><use href="#cr"/></svg></i><svg width="16" height="16"><use href="#fc"/></svg>门窗洞</div></li>
      <li><div class="twig"><i><svg width="10" height="10" class="m-0 text-secondary"><use href="#cr"/></svg></i><svg width="16" height="16"><use href="#fc"/></svg>梁</div></li>
      <li><div class="twig"><i><svg width="10" height="10" class="m-0 text-secondary"><use href="#cr"/></svg></i><svg width="16" height="16"><use href="#fc"/></svg>板</div></li>
      <li><div class="twig"><i><svg width="10" height="10" class="m-0 text-secondary"><use href="#cr"/></svg></i><svg width="16" height="16"><use href="#fc"/></svg>基础</div></li>
      <li><div class="twig"><i><svg width="10" height="10" class="m-0 text-secondary"><use href="#cr"/></svg></i><svg width="16" height="16"><use href="#fc"/></svg>其它</div></li>
      <li><div class="twig"><i><svg width="10" height="10" class="m-0"><use href="#cd"/></svg></i><svg width="16" height="16"><use href="#fo"/></svg>自定义</div>
        <ul>
          <li><div class="twig"><svg class="leaf" width="16" height="16"><use href="#tpt"/></svg>自定义点</div></li>
          <li><div class="twig sel"><svg class="leaf" width="16" height="16"><use href="#tline"/></svg>自定义线(X)</div></li>
          <li><div class="twig"><svg class="leaf" width="16" height="16"><use href="#tarea"/></svg>自定义面</div></li>
          <li><div class="twig"><svg class="leaf" width="16" height="16"><use href="#tdim"/></svg>尺寸标注(W)</div></li>
        </ul></li>
      <li><div class="twig"><i><svg width="10" height="10" class="m-0 text-secondary"><use href="#cr"/></svg></i><svg width="16" height="16"><use href="#fc"/></svg>CAD识别<svg width="16" height="16"><path d="M.5 1.500h14v13H.5z" fill="#dff0ff" stroke="#456"/><path d="M2.500 3.500h4v9h-4zM8.500 3.500h4v9h-4zM3 6h3M3 9h3M9 6h3M9 9h3" fill="#fff" stroke="#2a8be0"/></svg><span class="newtag">NEW</span></div></li>
    </ul>
    <div class="hs px-1"><svg width="10" height="10"><use href="#cl"/></svg><b class="w-75 ms-1 me-3"></b><svg width="10" height="10"><use href="#cr"/></svg></div>
  </div>
  <button class="sidebtn">单构件输入</button>
  <button class="sidebtn">报表预览</button>
  <div class="pb-1"></div>
</aside>

<main class="flex-grow-1 d-flex flex-column" style="min-width:0;margin-left:3px">
  <div class="brow d-flex">
    <div class="toolbar pe-1"><span class="grip"></span><button class="tb"><svg width="16" height="16"><use href="#brush"/></svg>删除</button><span class="sep"></span><button class="tb"><svg width="16" height="16"><use href="#copy"/></svg>复制</button><button class="tb"><svg width="16" height="16"><use href="#mirror"/></svg>镜像</button><span class="sep"></span><button class="tb"><svg width="16" height="16"><use href="#move"/></svg>移动</button><button class="tb"><svg width="16" height="16"><use href="#rot"/></svg>旋转</button><span class="sep"></span><button class="tb"><svg width="16" height="16"><use href="#extend"/></svg>延伸</button><button class="tb"><svg width="16" height="16"><use href="#trim"/></svg>修剪</button><span class="sep"></span><button class="tb"><svg width="16" height="16"><use href="#brk"/></svg>打断</button><button class="tb"><svg width="16" height="16"><use href="#join"/></svg>合并</button><button class="tb" disabled><svg width="16" height="16"><use href="#split"/></svg>分割</button><span class="sep"></span><button class="tb"><svg width="16" height="16"><use href="#align"/></svg>对齐<span class="car"></span></button><button class="tb"><svg width="16" height="16"><use href="#offset"/></svg>偏移</button><button class="tb"><svg width="16" height="16"><use href="#stretch"/></svg>拉伸</button><span class="sep"></span><button class="tb" disabled><svg width="16" height="16"><use href="#pen"/></svg>设置夹点</button></div>
  </div>
  <div class="brow d-flex">
    <div class="toolbar pe-1"><span class="grip"></span><select class="combo short" aria-label="楼层"><option>第7层</option></select><select class="combo" aria-label="构件类型"><option>自定义</option></select><select class="combo" aria-label="构件"><option>自定义线</option></select><select class="combo" aria-label="构件名称"><option>ZDYX-42</option></select><span class="sep"></span><button class="tb"><svg width="16" height="16"><use href="#prop"/></svg>属性</button><button class="tb on"><svg width="16" height="16"><use href="#rebar"/></svg>编辑钢筋</button><button class="tb"><svg width="16" height="16"><use href="#list"/></svg>构件列表</button><button class="tb"><svg width="16" height="16"><use href="#pick"/></svg>拾取构件</button></div>
    <div class="toolbar aux pe-1"><span class="grip ms-4"></span><button class="tb"><svg width="16" height="16"><use href="#axis2"/></svg>两点</button><button class="tb"><svg width="16" height="16"><use href="#axisp"/></svg>平行</button><button class="tb"><svg width="16" height="16"><use href="#axis2"/></svg>点角</button><button class="split" aria-label="点角选项"><span class="car"></span></button><button class="tb"><svg width="16" height="16"><use href="#axis3"/></svg>三点辅轴</button><button class="split" aria-label="三点选项"><span class="car"></span></button><button class="tb"><svg width="16" height="16"><use href="#brush"/></svg>删除辅轴</button><button class="tb"><svg width="16" height="16"><use href="#dim"/></svg>尺寸标注</button><button class="split" aria-label="标注选项"><span class="car"></span></button></div>
  </div>
  <div class="brow low d-flex">
    <div class="toolbar"><span class="grip"></span><button class="tb on"><svg width="16" height="16"><use href="#cursor"/></svg>选择</button><button class="split" aria-label="选择方式"><span class="car"></span></button><span class="sep"></span><button class="tb"><svg width="16" height="16"><use href="#line"/></svg>直线</button><button class="tb"><svg width="16" height="16"><use href="#ptlen"/></svg>点加长度</button><button class="tb"><svg width="16" height="16"><use href="#arc"/></svg>三点画弧</button><button class="split" aria-label="画弧选项"><span class="car"></span></button><select class="combo short ms-1 me-0" aria-label="半径"><option></option></select><button class="tb"><svg width="16" height="16"><use href="#rect"/></svg>矩形</button><span class="sep"></span><button class="tb"><svg width="16" height="16"><use href="#smart"/></svg>智能布置<span class="car"></span></button></div>
    <div class="toolbar ms-1 pe-4"><span class="grip"></span></div>
  </div>

  <svg class="view" viewBox="141 168 1224 305" preserveAspectRatio="xMinYMin slice" role="img" aria-label="三维视图">
    <g font-family="DejaVu Sans" font-size="14" fill="#ddd" text-anchor="middle"><text x="154" y="293">C</text><text x="154" y="353">1</text><text x="154" y="412">B</text><text x="155" y="465">0</text><text x="382" y="186">2</text><text x="706" y="186">3</text><text x="985" y="465">A1</text></g>
    <g stroke="#f00" shape-rendering="crispEdges" fill="none">
      <path d="M141 229L480 168M141 291L817 169M141 342.500L1111 168M185 401.500L1365 189M212 450L1365 241.700M547 473L1365 325.700M730 473L1365 358.300M902 473L1365 389.700M913 473L1365 391.700M1272 473L1365 456.700M521.700 168L1365 349"/>
      <path d="M198.300 168L371.700 473M341 168L514 473M375.300 168L548 473M409 168L582 473M507.700 168L680.700 473M664.300 168L837.700 473M698.700 168L871.700 473M733 168L906 473M863 142L1036.700 450M946 163L1101 437.700M1050 216L1168.700 426M1169 168L1301.700 402M141 265L258.300 473M141 325L225 473"/>
    </g>
    <g shape-rendering="crispEdges">
      <path d="M141 409l44-7.500M141 461.700l71-11.700" stroke="#008000"/>
      <g fill="none" stroke="#008000"><circle cx="154" cy="288.500" r="12.500"/><circle cx="154" cy="348" r="12.500"/><circle cx="154" cy="407" r="12.500"/><circle cx="154.500" cy="460" r="12.500"/><circle cx="382.500" cy="181" r="12.500"/><circle cx="706" cy="181" r="12.500"/><circle cx="985.500" cy="460" r="12.500"/></g>
      <path d="M204 240L467 193l3 18L208 257z" fill="#dedede"/><path d="M208 257L470 211l-10 56L198 314z" fill="#828282"/><path d="M204 240l4 17-10 57-9-15z" fill="#999"/>
      <path d="M267 351.500L1279 168h77L275 365z" fill="#00e600"/><path d="M275 365L1356 168h9v46L278 410z" fill="#00b300"/><path d="M267 351.500l8 13.500 3 45-7-16z" fill="#009a00"/>
      <path d="M275 365l325-58 4 8-324 58z" fill="#e6e6e6"/><path d="M280 373l324-58v8l-324 58z" fill="#b2b2b2"/><path d="M275 365l5 8v8l-3-6z" fill="#999"/>
      <path d="M600 307l231-42 20 36-230 42z" fill="#0075e8"/><path d="M621 343l230-42v7.500L622 350.500z" fill="#005bb5"/><path d="M600 307l21 36 1 7.500-18-28z" fill="#00509e"/>
      <path d="M824 245l15-2 9 38-3 3z" fill="#eee"/><path d="M824 245v7l24 42-3-14z" fill="#999"/>
      <path d="M817 168h273l15 50-258 47z" fill="#e8e8e8"/><path d="M847 265l258-47 2 25-2 5.500L848 294z" fill="#b2b2b2"/><path d="M817 168h2l29 97v29l-4-12v-14z" fill="#999"/>
      <path d="M1155 205L1356 169l9-1v21L1168 224l-4-9-2 9z" fill="#eaeaea"/><path d="M1155 205l7 19 2-9 4 9L1365 189v19L1168 244z" fill="#999"/><path d="M1165 232L1365 197v6L1168 238z" fill="#eaeaea"/>
      <path d="M192 388h5l1 33h-5zM194 379l6 12h-12z" fill="#0080ff"/><path d="M198 420l35-6v-5l11 5-11 6v-3l-35 6z" fill="#f00"/><path d="M196 423l-11-19" stroke="#0f0" stroke-width="3"/><path d="M183 408v-6h6" fill="none" stroke="#0f0" stroke-width="2"/>
      <path d="M180 376h8l-8 9h8" fill="none" stroke="#0080ff"/><path d="M196 398l4 4 4-4M200 402v5" fill="none" stroke="#0f0"/><path d="M228 404l9 9M237 404l-9 9" stroke="#f00"/>
    </g>
  </svg>

  <div class="snaprow d-flex">
    <div class="toolbar pe-1"><span class="grip"></span><button class="tb"><svg width="16" height="16"><use href="#ortho"/></svg>正交</button><button class="tb on"><svg width="16" height="16"><use href="#osnap"/></svg>对象捕捉</button><button class="tb"><svg width="16" height="16"><use href="#dyn"/></svg>动态输入</button></div>
    <div class="toolbar pe-1"><span class="grip"></span><button class="tb"><svg width="16" height="16"><use href="#cross"/></svg>交点</button><button class="tb on"><svg width="16" height="16"><use href="#perp"/></svg>垂点</button><button class="tb on"><svg width="16" height="16"><use href="#mid"/></svg>中点</button><button class="tb"><svg width="16" height="16"><use href="#vert"/></svg>顶点</button><button class="tb"><svg width="16" height="16"><use href="#coord"/></svg>坐标</button></div>
    <div class="toolbar"><span class="grip"></span><select class="combo short me-0" aria-label="偏移方式"><option>不偏移</option></select><span class="sep"></span>
      <label class="dim ms-1 me-1" for="ox">X=</label><span class="spin"><input id="ox" type="text" value="0"><svg width="6" height="16"><use href="#ud"/></svg></span><span class="dim me-1">mm</span>
      <label class="dim me-1" for="oy">Y=</label><span class="spin"><input id="oy" type="text" value="0"><svg width="6" height="16"><use href="#ud"/></svg></span><span class="dim">mm</span><span class="sep"></span>
      <input class="chk" type="checkbox" id="rotchk"><label class="me-1" for="rotchk">旋转</label><span class="spin wide"><input type="text" aria-label="旋转角度" value="0.000"><svg width="6" height="16"><use href="#ud"/></svg></span><span class="dim ms-1">°</span></div>
  </div>

  <div class="flex-grow-1 d-flex">
    <div class="gripcol d-flex flex-column"><svg width="11" height="11"><path d="M.5.5h10v9H.5z" fill="#eee" stroke="#644"/><path d="M3 3l6 6M9 3L3 9" stroke="#222" stroke-width="1.500"/></svg><div class="flex-grow-1"></div></div>
    <section class="flex-grow-1 d-flex flex-column" style="min-width:0">
      <div class="toolbar mt-1">
        <button class="tb" disabled aria-label="首条"><svg width="16" height="16"><use href="#first"/></svg></button><button class="tb" disabled aria-label="上条"><svg width="16" height="16"><use href="#prev"/></svg></button><button class="tb" disabled aria-label="下条"><svg width="16" height="16"><use href="#next"/></svg></button><button class="tb" disabled aria-label="末条"><svg width="16" height="16"><use href="#last"/></svg></button><span class="sep"></span><button class="tb" disabled aria-label="上移"><svg width="16" height="16"><use href="#up"/></svg></button><button class="tb" disabled aria-label="下移"><svg width="16" height="16"><use href="#down"/></svg></button><span class="sep"></span><button class="tb" disabled><svg width="16" height="16"><use href="#ins"/></svg>插入</button><button class="tb" disabled><svg width="16" height="16"><use href="#del"/></svg>删除</button><button class="tb" disabled><svg width="16" height="16"><use href="#scale"/></svg>缩尺配筋</button><button class="tb" disabled><svg width="16" height="16"><use href="#info"/></svg>钢筋信息</button><button class="tb"><svg width="16" height="16"><use href="#lib"/></svg>钢筋图库</button><button class="tb"><svg width="16" height="16"><use href="#other"/></svg>其他<span class="car"></span></button><button class="tb">关闭</button><span class="sep ms-1"></span><span class="ps-1">单构件钢筋总重(kg)：0</span>
      </div>
      <div class="griddock flex-grow-1 d-flex flex-column song">
        <table class="bars">
          <colgroup><col class="c33"><col class="c73"><col class="c56"><col class="c36"><col class="c33"><col class="c201"><col class="c166"><col class="c156"><col class="c61"><col class="c38"><col class="c38"><col class="c49"><col class="c61"><col class="c61"><col class="c71"><col class="c73"></colgroup>
          <thead><tr><th></th><th>筋号</th><th class="cur">直径(mm)</th><th>级别</th><th>图号</th><th>图形</th><th>计算公式</th><th>公式描述</th><th>长度(mm)</th><th>根数</th><th>搭接</th><th>损耗(%)</th><th>单重(kg)</th><th>总重(kg)</th><th>钢筋归类</th><th>搭接形式</th></tr></thead>
          <tbody><tr><th class="rowno">1*</th><td></td><td class="curcell"></td><td></td><td></td><td></td><td></td><td></td><td></td><td></td><td></td><td></td><td></td><td></td><td></td><td></td></tr></tbody>
        </table>
        <div class="hs mt-auto px-1"><svg width="10" height="10"><use href="#cl"/></svg><b class="w-75 ms-1"></b><svg class="ms-auto" width="10" height="10"><use href="#cr"/></svg></div>
      </div>
    </section>
  </div>
</main>
</div>

<footer>
  <div class="stat d-flex song"><div class="st1">X=-43889 Y=-11069</div><div class="st2">层高:2.8m</div><div class="st3">底标高:20.35m</div><div class="st4">1(1)</div><div class="flex-grow-1">按鼠标左键指定第一个角点，或拾取构件图元</div><div class="st5">498.3 FPS</div></div>
  <div class="taskbar d-flex align-items-center">
    <button class="startbtn" aria-label="开始"><svg width="16" height="16" fill="#fff"><path d="M0 2l7-1v6H0zM8 1l8-1v7H8zM0 8h7v7l-7-1zM8 8h8v8l-8-1z"/></svg></button>
    <div class="seek d-flex align-items-center"><svg width="23" height="23"><circle cx="11.500" cy="11.500" r="9" fill="none" stroke="#fff" stroke-width="3"/></svg><input type="search" aria-label="搜索" placeholder="在这里输入你要搜索的内容"><svg width="16" height="18" fill="none" stroke="#aaa"><rect x="5.500" y="1.500" width="5" height="10" rx="2"/><path d="M3 8v4q0 2 5 2t5-2V8M8 14v3M5 17h6"/></svg></div>
    <button class="app" aria-label="任务视图"><svg width="20" height="16" fill="none" stroke="#fff"><path d="M4.500 1.500h11v13h-11zM3 3.500H.5v9H3M17 3.500h2.500v9H17"/></svg></button>
    <button class="app" aria-label="风车"><svg width="24" height="24" fill="#eee"><path d="M11 11Q0 12 2 5q3-5 8-2 2 3 1 8zM13 11Q12 0 19 2q5 3 2 8-3 2-8 1zM13 13q11-1 9 6-3 5-8 2-2-3-1-8zM11 13q1 11-6 9-5-3-2-8 3-2 8-1z"/></svg></button>
    <button class="app" aria-label="浏览器"><svg width="24" height="24"><path d="M2 13Q3 4 12 4q9 1 9 10H8q1 4 5 4 3 0 4-2h4q-2 6-9 6Q3 21 2 13zm6-2h8q-1-4-4-4-3 1-4 4z" fill="#eee"/><path d="M4 16q-4 8 4 5M14 4q9-5 6 3" fill="none" stroke="#eee" stroke-width="1.500"/></svg></button>
    <button class="app" aria-label="提醒"><svg width="26" height="28"><path d="M15 18q-6 4-7-3 0-6 6-5 5 2 3 8-4 7-11 3-6-5-2-12 5-5 10-3" fill="none" stroke="#ddd" stroke-width="1.600"/><path d="M13 11l2-3V4q3-4 6 0v4l3 3zM17 12h3v2h-3z" fill="#e3a70e"/></svg></button>
    <button class="app" aria-label="Edge"><svg width="24" height="24"><path d="M2 10Q4 2 12 2q9 1 9 11H8q1 5 7 5 3 0 5-1v4q-3 2-8 1-8-2-8-9 1-4 6-6-4 1-8 3zm6-1h8q-1-4-4-4-3 1-4 4z" fill="#0b7ad8"/></svg></button>
    <button class="app" aria-label="Internet Explorer"><svg width="24" height="24"><path d="M2 13Q3 4 12 4q9 1 9 10H8q1 4 5 4 3 0 4-2h4q-2 6-9 6Q3 21 2 13zm6-2h8q-1-4-4-4-3 1-4 4z" fill="#4fb5ec"/><path d="M3 22q-3-3 5-11T21 2q3 1 0 6" fill="none" stroke="#f5c82b" stroke-width="2"/></svg></button>
    <button class="app" aria-label="文件资源管理器"><svg width="24" height="22"><path d="M1 2h8l1 2h12v16H1z" fill="#ffd873"/><path d="M1 7h21v13H1z" fill="#ffe9a3"/><path d="M5 20v-7h13v7h-4v-4H9v4z" fill="#35a6dd"/></svg></button>
    <button class="app run" aria-label="360浏览器"><svg width="24" height="24"><circle cx="12" cy="12" r="11" fill="#58b83a"/><path d="M7 12h11q-1-6-6-6t-6 6q1 6 6 6 3 0 5-2" fill="none" stroke="#fff" stroke-width="2.500"/></svg></button>
    <button class="app front" aria-label="钢筋算量"><svg width="24" height="24"><use href="#logo"/></svg></button>
    <button class="app run" aria-label="广联达"><svg width="24" height="24"><path d="M23 1q-3 4-8 5-6 1-6 6 1 5 6 4 3-2 1-4-2-1-4 0 3-4 10-3 1 8-5 12-8 4-13-2Q-1 11 5 5q6-4 18-4z" fill="#1e96ee"/></svg></button>
    <button class="app run" aria-label="记事"><svg width="24" height="24"><rect width="24" height="24" rx="3" fill="#f7a52a"/><path d="M3 4h17v17H3z" fill="#fffbe8"/><path d="M6 8h9M6 12h7M6 16h6" stroke="#a86720"/><path d="M11 17L20 3l2 1-9 14z" fill="#c13a22"/></svg></button>
    <button class="app run" aria-label="PDF"><svg width="24" height="24"><rect width="24" height="24" rx="3" fill="#c66b1c"/><text x="12" y="17" font-size="10" font-weight="bold" fill="#fbe8d4" text-anchor="middle">PDF</text></svg></button>
    <div class="tray d-flex align-items-center ms-auto">
      <span>链接</span><svg width="12" height="10"><path d="M1 8l5-5 5 5" fill="none" stroke="#fff" stroke-width="1.400"/></svg>
      <svg width="16" height="10"><path d="M1.500 1.500h12v7h-12zM14.500 3v4" fill="none" stroke="#fff"/><path d="M3 3h4v4H3z" fill="#fff"/></svg>
      <svg width="14" height="14" fill="none" stroke="#ddd"><path d="M1 13Q2 3 13 1M4 13Q5 6 13 5M7 13q1-5 6-5M10 13q1-2 3-2"/></svg>
      <svg width="18" height="14" fill="none" stroke="#fff"><path d="M1.500 5v4h2l4 3V2l-4 3zM10 5q2 2 0 4M12 3q4 4 0 8M14 1q5 6 0 12"/></svg>
      <svg width="22" height="14" fill="none" stroke="#fff"><path d="M.5.500h21v12H.5z"/><path d="M3 4h16M3 7h16" stroke-dasharray="2 1"/><path d="M5 10h12"/></svg>
      <span class="fs-5">A</span><svg class="mx-1" width="16" height="16"><use href="#sogou"/></svg>
      <div class="clock">9:33<br>2018/5/24</div>
      <svg class="ms-1" width="26" height="24"><path d="M1 2h15v12H8l-4 3v-3H1z" fill="#fff"/><path d="M3 5h11M3 8h11M3 11h8" stroke="#223"/><circle cx="17" cy="16" r="7.500" fill="#333" stroke="#aaa"/><text x="17" y="20" font-size="11" fill="#fff" text-anchor="middle">1</text></svg>
    </div>
  </div>
</footer>
<script src="https://cdn.jsdelivr.net/npm/bootstrap@5.3.0/dist/js/bootstrap.bundle.min.js"></script>
</body>
</html>
